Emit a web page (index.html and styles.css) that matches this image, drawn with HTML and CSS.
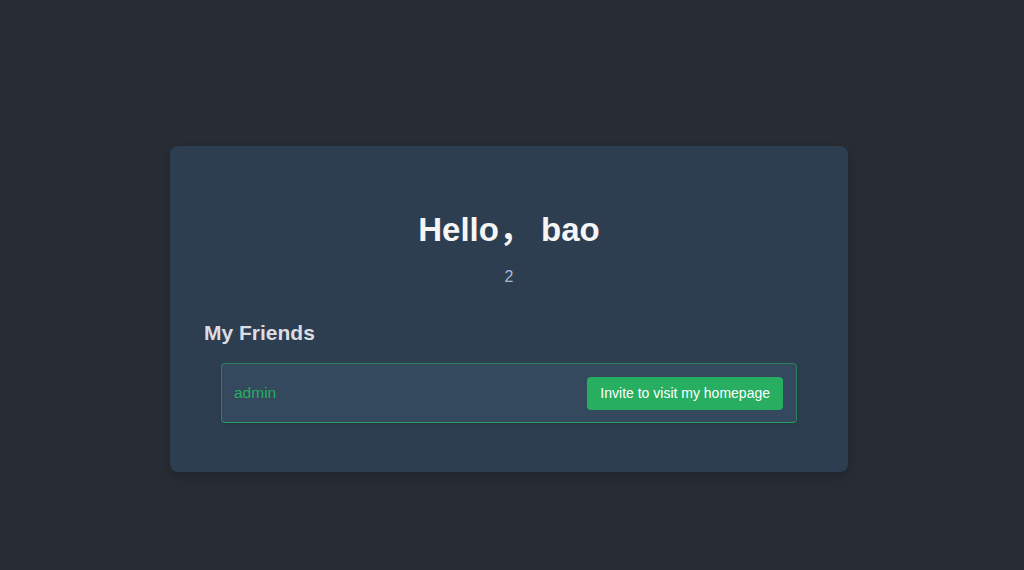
FILE: index.html
```html
<!DOCTYPE html>
<html lang="en">
<head>
<meta charset="utf-8">
<title>Home</title>
<link rel="stylesheet" href="styles.css">
</head>
<body>
<main class="card">
  <h1 class="title">Hello， bao</h1>
  <p class="count">2</p>
  <h2 class="section-title">My Friends</h2>
  <ul class="friends">
    <li class="friend">
      <span class="friend-name">admin</span>
      <button class="invite">Invite to visit my homepage</button>
    </li>
  </ul>
</main>
</body>
</html>
```
FILE: styles.css
```css
html, body {
  margin: 0;
  padding: 0;
  background: #282c34;
  font-family: "Liberation Sans", Arial, "Noto Sans CJK SC", sans-serif;
  height: 100%;
}
body {
  padding-top: 146px;
  box-sizing: border-box;
}
.card {
  box-sizing: border-box;
  width: 678px;
  height: 326px;
  margin-left: 170px;
  background: #2c3e50;
  border-radius: 8px;
  box-shadow: 0 4px 12px rgba(0, 0, 0, 0.2);
  padding: 64px 34px 0 34px;
}
.title {
  margin: 0;
  text-align: center;
  font-size: 33px;
  line-height: 40px;
  font-weight: bold;
  color: #f5f5f5;
}
.count {
  margin: 17px 0 0;
  text-align: center;
  font-size: 16px;
  line-height: 20px;
  color: #a9b8d8;
}
.section-title {
  margin: 34px 0 0;
  font-size: 21px;
  line-height: 24px;
  font-weight: bold;
  color: #dcdde1;
}
.friends {
  list-style: none;
  margin: 18px 17px 0 17px;
  padding: 0;
}
.friend {
  box-sizing: border-box;
  height: 60px;
  display: flex;
  align-items: center;
  justify-content: space-between;
  padding: 0 13px 0 12px;
  background: #34495e;
  border: 1px solid rgba(39, 174, 96, 0.55);
  border-bottom-color: rgba(39, 174, 96, 0.85);
  border-radius: 4px;
  box-shadow: 0 2px 4px rgba(0, 0, 0, 0.12);
}
.friend-name {
  color: #27ae60;
  font-size: 15.5px;
}
.invite {
  height: 33px;
  padding: 0 13px;
  border: none;
  border-radius: 4px;
  background: #27ae60;
  color: #ffffff;
  font-family: "Liberation Sans", Arial, sans-serif;
  font-size: 14px;
  cursor: pointer;
}
```
